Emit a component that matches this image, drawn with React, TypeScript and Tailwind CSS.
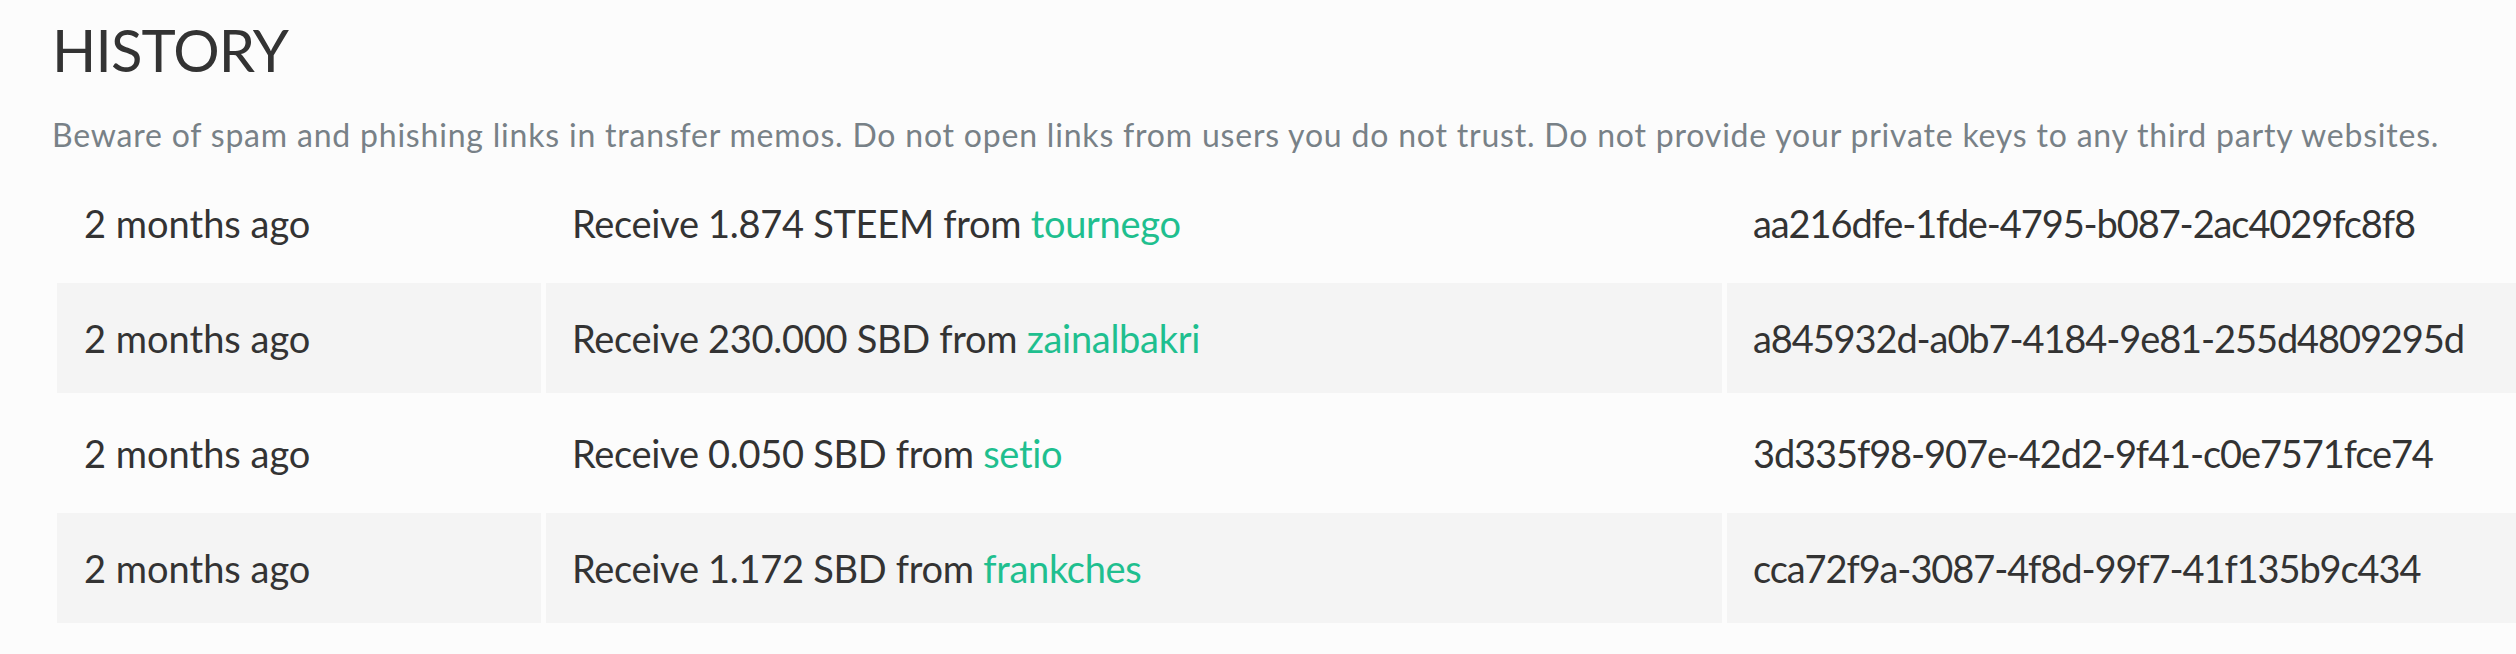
import React from "react";

const rows = [
  { when: "2 months ago", text: "Receive 1.874 STEEM from ", user: "tournego", memo: "aa216dfe-1fde-4795-b087-2ac4029fc8f8", shaded: false },
  { when: "2 months ago", text: "Receive 230.000 SBD from ", user: "zainalbakri", memo: "a845932d-a0b7-4184-9e81-255d4809295d", shaded: true },
  { when: "2 months ago", text: "Receive 0.050 SBD from ", user: "setio", memo: "3d335f98-907e-42d2-9f41-c0e7571fce74", shaded: false },
  { when: "2 months ago", text: "Receive 1.172 SBD from ", user: "frankches", memo: "cca72f9a-3087-4f8d-99f7-41f135b9c434", shaded: true },
];

export default function App() {
  return (
    <div
      className="w-[2516px] h-[654px] overflow-hidden bg-[#fcfcfc] text-[#333333] pl-[52px]"
      style={{ fontFamily: "Lato, 'Noto Sans', 'Liberation Sans', sans-serif" }}
    >
      <h2 className="pt-[21px] text-[58px] leading-[58px] font-normal tracking-[-0.8px]">HISTORY</h2>
      <p className="mt-[40px] text-[32px] leading-[31px] tracking-[0.8px] text-[#788187] whitespace-nowrap">
        Beware of spam and phishing links in transfer memos. Do not open links from users you do not trust. Do not provide your private keys to any third party websites.
      </p>
      <table className="mt-[13px] border-separate border-spacing-[5px] table-fixed w-[2590px]">
        <colgroup>
          <col className="w-[484px]" />
          <col className="w-[1176px]" />
          <col className="w-[910px]" />
        </colgroup>
        <tbody>
          {rows.map((r, i) => (
            <tr key={i}>
              <td className={`h-[110px] pl-[27px] align-middle text-[38px] whitespace-nowrap ${r.shaded ? "bg-[#f4f4f4]" : ""}`}>
                {r.when}
              </td>
              <td className={`h-[110px] pl-[26px] align-middle text-[38px] tracking-[-0.3px] whitespace-nowrap ${r.shaded ? "bg-[#f4f4f4]" : ""}`}>
                {r.text}
                <a className="text-[#1fbf8f]">{r.user}</a>
              </td>
              <td className={`h-[110px] pl-[26px] align-middle text-[38px] tracking-[-1.1px] whitespace-nowrap ${r.shaded ? "bg-[#f4f4f4]" : ""}`}>
                {r.memo}
              </td>
            </tr>
          ))}
        </tbody>
      </table>
    </div>
  );
}
